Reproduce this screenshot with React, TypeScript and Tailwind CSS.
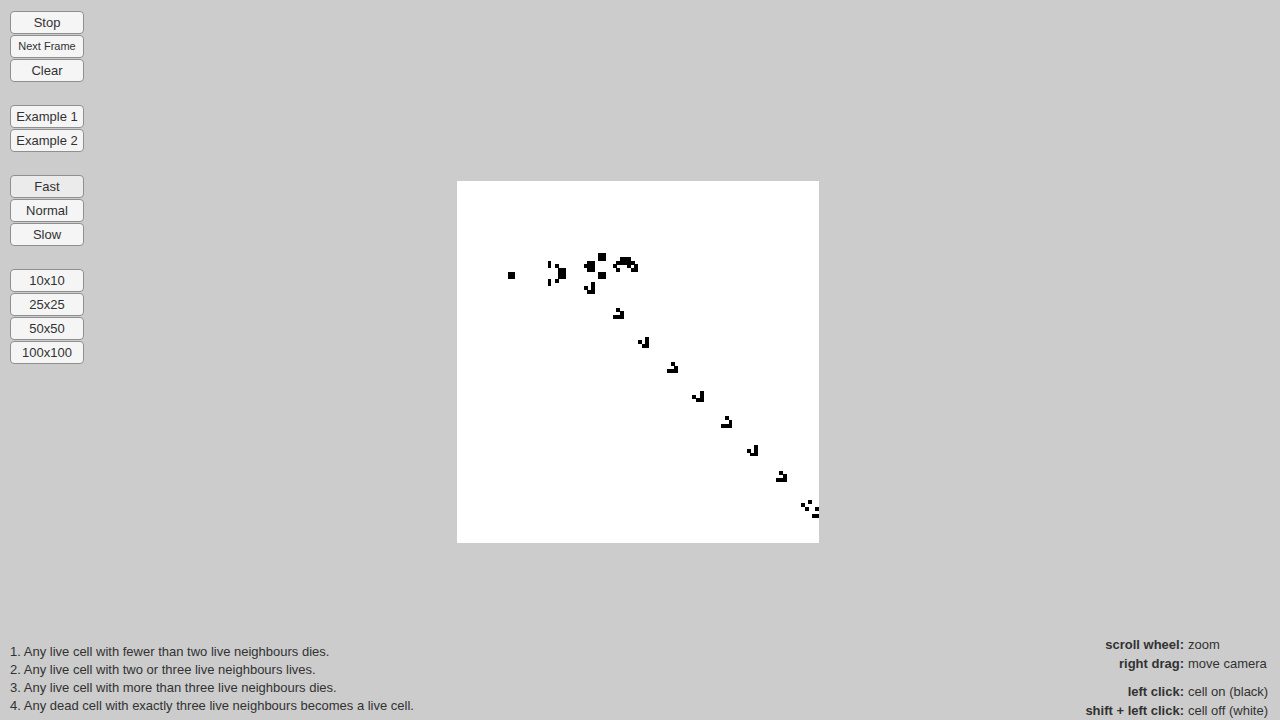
import { useState } from "react";
import clsx from "clsx";

type Cell = [number, number];

const BOARD_SIZE = 100;

// slightly over one unit, so that neighbouring cells leave no seam
const CELL_SIZE = 1.1;

const buttonGroups = [
  ["Stop", "Next Frame", "Clear"],
  ["Example 1", "Example 2"],
  ["Fast", "Normal", "Slow"],
  ["10x10", "25x25", "50x50", "100x100"],
];

const rules = [
  "Any live cell with fewer than two live neighbours dies.",
  "Any live cell with two or three live neighbours lives.",
  "Any live cell with more than three live neighbours dies.",
  "Any dead cell with exactly three live neighbours becomes a live cell.",
];

const controls = [
  [
    { keys: "scroll wheel:", action: "zoom" },
    { keys: "right drag:", action: "move camera" },
  ],
  [
    { keys: "left click:", action: "cell on (black)" },
    { keys: "shift + left click:", action: "cell off (white)" },
  ],
];

// a pattern is placed by its top left corner, "#" is a live cell
function place(x: number, y: number, rows: string[]): Cell[] {
  return rows.flatMap((row, dy) =>
    [...row].flatMap((c, dx): Cell[] => (c === "#" ? [[x + dx, y + dy]] : [])),
  );
}

const block = ["##", "##"];
const gliderA = ["..#", "#.#", ".##"];
const gliderB = [".#.", "..#", "###"];

const cells: Cell[] = [
  ...place(14, 25, block),
  ...place(25, 22, ["#", "#.#", "...##", "...##", "...##", "#.#", "#"]),
  ...place(35, 22, [".##", "###", ".##"]),
  ...place(39, 20, block),
  ...place(39, 25, block),
  ...place(43, 21, ["..###", ".#####", "#...#.#", ".#...##"]),
  ...place(35, 28, gliderA),
  ...place(43, 35, gliderB),
  ...place(50, 43, gliderA),
  ...place(58, 50, gliderB),
  ...place(65, 58, gliderA),
  ...place(73, 65, gliderB),
  ...place(80, 73, gliderA),
  ...place(88, 80, gliderB),
  ...place(95, 88, ["..#", "#", ".#..#", "", "...##"]),
];

function Board() {
  return (
    <svg
      viewBox={`0 0 ${BOARD_SIZE} ${BOARD_SIZE}`}
      shapeRendering="crispEdges"
      role="img"
      className="size-[362px] bg-white"
    >
      {cells.map(([x, y]) => (
        <rect key={`${x}-${y}`} x={x} y={y} width={CELL_SIZE} height={CELL_SIZE} fill="#000" />
      ))}
    </svg>
  );
}

export default function App() {
  const [speed, setSpeed] = useState("Fast");

  return (
    <main className="grid min-h-screen bg-[#cccccc] font-['Liberation_Sans',Arial,sans-serif] text-[#323232]">
      <div className="col-start-1 row-start-1 flex items-center justify-center pt-1 pr-1">
        <Board />
      </div>

      <div className="col-start-1 row-start-1 flex flex-col justify-between px-[10px] pt-[11px]">
        <nav className="flex w-[74px] flex-col gap-[23px]">
          {buttonGroups.map((group) => (
            <div key={group[0]} className="flex flex-col gap-px">
              {group.map((label) => (
                <button
                  key={label}
                  type="button"
                  onClick={() => group.includes("Fast") && setSpeed(label)}
                  className={clsx(
                    "h-[23px] rounded-[4px] border border-[#8f8f8f] whitespace-nowrap",
                    label === "Next Frame" ? "text-[11px]" : "text-[13px]",
                    label === speed ? "bg-[#ebebeb]" : "bg-[#f5f5f5]",
                  )}
                >
                  {label}
                </button>
              ))}
            </div>
          ))}
        </nav>

        <footer className="flex items-end justify-between">
          <ol className="pb-[5px] text-[13px] leading-[18px]">
            {rules.map((rule, i) => (
              <li key={rule}>
                {i + 1}. {rule}
              </li>
            ))}
          </ol>

          <div className="flex flex-col gap-[9px] text-[13px] leading-[19px]">
            {controls.map((group) => (
              <dl key={group[0].keys}>
                {group.map(({ keys, action }) => (
                  <div key={keys} className="flex justify-end gap-1">
                    <dt className="font-bold">{keys}</dt>
                    <dd className="w-[82px]">{action}</dd>
                  </div>
                ))}
              </dl>
            ))}
          </div>
        </footer>
      </div>
    </main>
  );
}
